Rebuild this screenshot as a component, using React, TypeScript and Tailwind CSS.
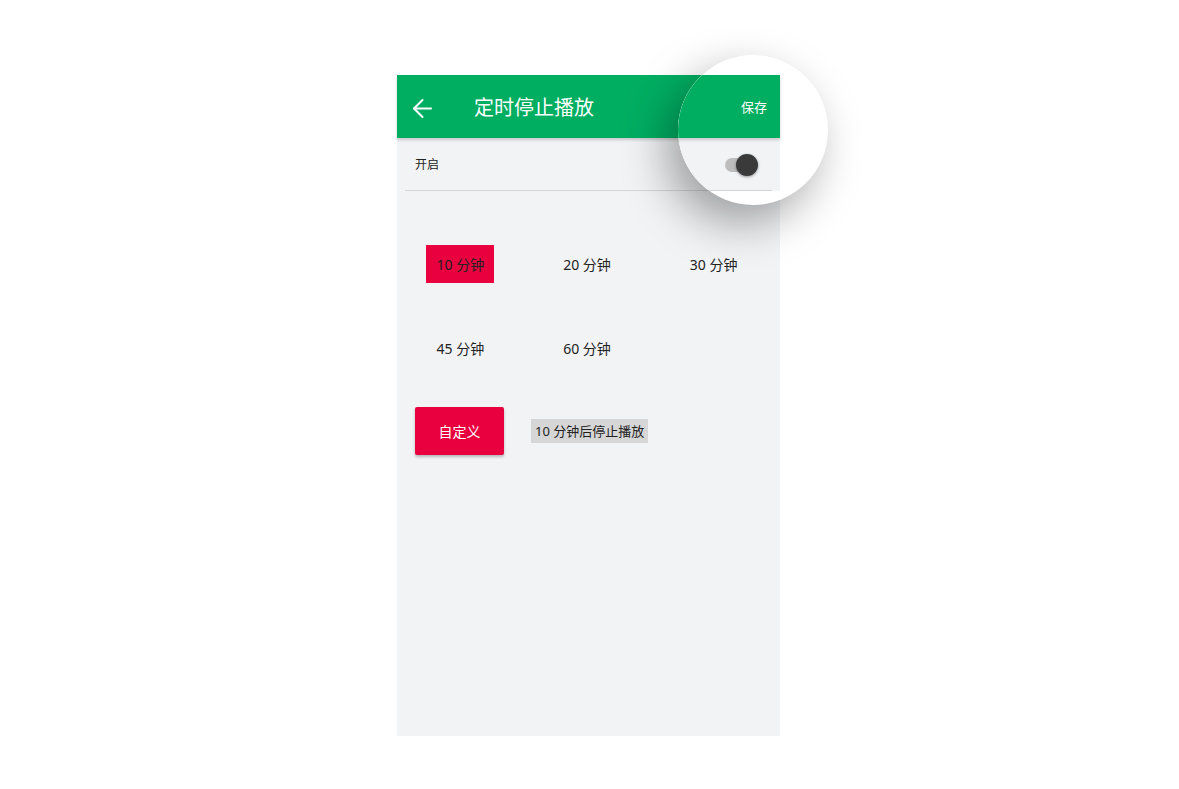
import { ArrowLeft } from "lucide-react";

const options = ["10 分钟", "20 分钟", "30 分钟", "45 分钟", "60 分钟"];

function TopBar() {
  return (
    <>
      <div className="flex h-[63px] items-center bg-[#00ae62] pt-[3px] shadow-[0_2px_3px_rgba(0,0,0,0.18)]">
        <div className="flex w-[77px] pl-[11px]">
          <ArrowLeft className="h-[29px] w-[29px] text-white" strokeWidth={1.7} />
        </div>
        <div className="flex-1 text-[20px] text-white">定时停止播放</div>
        <div className="pr-[13px] text-[13px] text-white">保存</div>
      </div>
      <div className="mx-[8px] flex h-[53px] items-center justify-between border-b border-[#d4d5d8] pl-[10px] pr-[19px] pt-[2px]">
        <span className="text-[12px] text-[#222]">开启</span>
        <div className="relative h-[14px] w-[28px] rounded-full bg-[#bdbdbd]">
          <div className="absolute -top-[4px] left-[11px] h-[22px] w-[22px] rounded-full bg-[#3a3a3a] shadow-[0_1px_3px_rgba(0,0,0,0.4)]" />
        </div>
      </div>
    </>
  );
}

export default function App() {
  return (
    <div
      className="relative h-[789px] w-[1179px] bg-white"
      style={{ fontFamily: '"Noto Sans", "Noto Sans CJK SC", sans-serif' }}
    >
      <div className="absolute left-[397px] top-[75px] flex h-[661px] w-[383px] flex-col bg-[#f2f3f5]">
        <TopBar />
        <div className="mt-[54px] grid grid-cols-3 gap-y-[46px] pr-[3px]">
          {options.map((o, i) => (
            <div key={o} className="flex justify-center">
              <div
                className={
                  i === 0
                    ? "flex h-[38px] w-[68px] items-center justify-center bg-[#e8003f] text-[14px] text-[#222]"
                    : "flex h-[38px] w-[68px] items-center justify-center text-[14px] text-[#222]"
                }
              >
                {o}
              </div>
            </div>
          ))}
        </div>
        <div className="mt-[40px] flex items-center pl-[18px]">
          <button className="h-[48px] w-[89px] rounded-[2px] bg-[#e8003f] text-[14px] text-white shadow-[0_2px_3px_rgba(0,0,0,0.25)]">
            自定义
          </button>
          <span className="ml-[27px] bg-[#d6d6d6] px-[4px] py-[3px] text-[13px] leading-[18px] text-[#222]">
            10 分钟后停止播放
          </span>
        </div>
      </div>

      {/* magnifier */}
      <div className="absolute left-[678px] top-[55px] h-[150px] w-[150px] overflow-hidden rounded-full bg-white shadow-[-12px_18px_45px_rgba(0,0,0,0.35)]">
        <div className="absolute left-[-281px] top-[20px] w-[383px] bg-[#f2f3f5]">
          <TopBar />
        </div>
      </div>
    </div>
  );
}
